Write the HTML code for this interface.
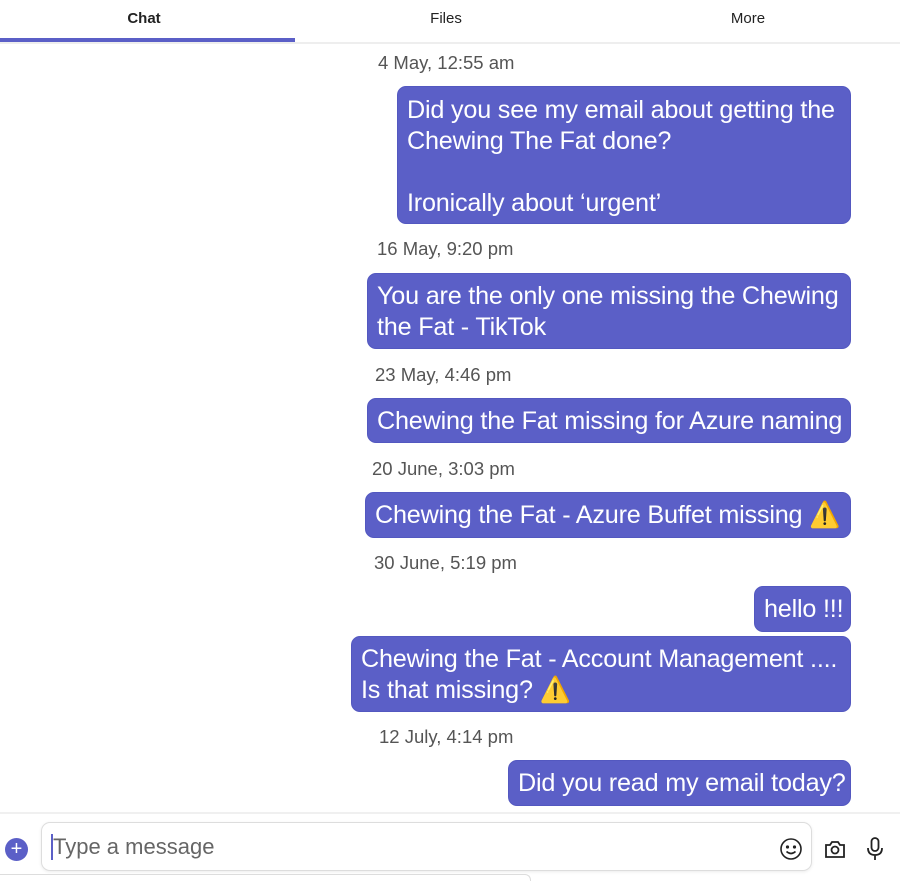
<!DOCTYPE html><html><head><style>
body{margin:0;width:900px;height:879px;background:#fff;font-family:"Liberation Sans",sans-serif;position:relative;overflow:hidden}
.t{position:absolute;font-size:15px;color:#222;transform:translateX(-50%);top:10px}
.ts{position:absolute;font-size:18.5px;color:#555}
.b{position:absolute;background:#5b5fc7;color:#fff;border-radius:9px;font-size:25.2px;line-height:31px;padding:7px 9px;box-sizing:border-box;border:1px solid #5358c0;white-space:nowrap;letter-spacing:-0.2px}
</style></head><body>
<div class="t" style="left:144px;font-weight:bold">Chat</div>
<div class="t" style="left:446px">Files</div>
<div class="t" style="left:748px">More</div>
<div style="position:absolute;left:0;top:42px;width:900px;height:2px;background:#eee"></div>
<div style="position:absolute;left:0;top:38px;width:295px;height:4px;background:#5b5fc7"></div>

<div class="ts" style="left:378px;top:52px">4 May, 12:55 am</div>
<div class="b" style="left:397px;top:86px;width:454px;height:138px;padding-top:8px">Did you see my email about getting the<br>Chewing The Fat done?<br><br>Ironically about ‘urgent’</div>
<div class="ts" style="left:377px;top:238px">16 May, 9:20 pm</div>
<div class="b" style="left:367px;top:273px;width:484px;height:76px">You are the only one missing the Chewing<br>the Fat - TikTok</div>
<div class="ts" style="left:375px;top:364px">23 May, 4:46 pm</div>
<div class="b" style="left:367px;top:398px;width:484px;height:45px">Chewing the Fat missing for Azure naming</div>
<div class="ts" style="left:372px;top:458px">20 June, 3:03 pm</div>
<div class="b" style="left:365px;top:492px;width:486px;height:46px">Chewing the Fat - Azure Buffet missing ⚠️</div>
<div class="ts" style="left:374px;top:552px">30 June, 5:19 pm</div>
<div class="b" style="left:754px;top:586px;width:97px;height:46px">hello !!!</div>
<div class="b" style="left:351px;top:636px;width:500px;height:76px">Chewing the Fat - Account Management ....<br>Is that missing? ⚠️</div>
<div class="ts" style="left:379px;top:726px">12 July, 4:14 pm</div>
<div class="b" style="left:508px;top:760px;width:343px;height:46px">Did you read my email today?</div>

<div style="position:absolute;left:0;top:812px;width:900px;height:2px;background:#f0f0f0"></div>
<div style="position:absolute;left:5px;top:838px;width:23px;height:23px;border-radius:50%;background:#5b5fc7;color:#fff;font-size:20px;line-height:22px;text-align:center">+</div>
<div style="position:absolute;left:41px;top:822px;width:771px;height:49px;border:1px solid #ddd;border-radius:9px;box-sizing:border-box;box-shadow:0 1px 3px rgba(0,0,0,.08)"></div>
<div style="position:absolute;left:51px;top:834px;width:2px;height:26px;background:#5b5fc7"></div>
<div style="position:absolute;left:53px;top:834px;font-size:22px;color:#666">Type a message</div>
<svg style="position:absolute;left:779px;top:837px" width="24" height="24" viewBox="0 0 24 24" fill="none" stroke="#222" stroke-width="1.6"><circle cx="12" cy="12" r="10"/><circle cx="8.5" cy="10" r=".8" fill="#222"/><circle cx="15.5" cy="10" r=".8" fill="#222"/><path d="M7.5 14.5q4.5 4 9 0"/></svg>
<svg style="position:absolute;left:824px;top:838px" width="22" height="22" viewBox="0 0 22 22" fill="none" stroke="#222" stroke-width="1.8"><path d="M2 7h4l2-3h6l2 3h4v12H2z"/><circle cx="11" cy="12" r="3.5"/></svg>
<svg style="position:absolute;left:866px;top:837px" width="18" height="24" viewBox="0 0 18 24" fill="none" stroke="#222" stroke-width="1.8"><rect x="5.5" y="1" width="7" height="13" rx="3.5"/><path d="M2 11q0 7 7 7q7 0 7-7M9 18v5"/></svg>
<div style="position:absolute;left:0;top:874px;width:530px;height:6px;border-top:1px solid #ddd;border-right:1px solid #ddd;border-radius:0 6px 0 0"></div>
</body></html>
